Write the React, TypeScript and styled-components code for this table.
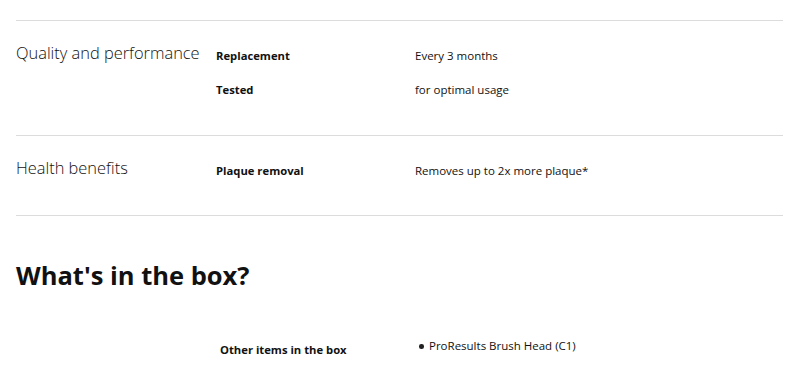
import React from "react";
import styled, { createGlobalStyle } from "styled-components";

const Global = createGlobalStyle`
  html, body { margin: 0; padding: 0; background: #fff; }
  body { font-family: "Open Sans", "Noto Sans", Arial, sans-serif; color: #111; }
`;

const Page = styled.div`
  padding: 20px 4px 0 16px;
`;

const Group = styled.section<{ $last?: boolean }>`
  display: grid;
  grid-template-columns: 200px 199px 1fr;
  border-top: 1px solid #dcdcdc;
  ${(p) => (p.$last ? "border-bottom: 1px solid #dcdcdc; padding-bottom: 28px;" : "padding-bottom: 29px;")}
  padding-top: 17px;
`;

const GroupTitle = styled.h3`
  grid-column: 1;
  margin: 0;
  font-size: 16.4px;
  font-weight: 300;
  line-height: 30px;
  color: #111;
`;

const Rows = styled.div`
  grid-column: 2 / span 2;
  display: flex;
  flex-direction: column;
`;

const Row = styled.div`
  display: grid;
  grid-template-columns: 199px 1fr;
  height: 34px;
  align-items: center;
`;

const Label = styled.span`
  font-size: 11.25px;
  font-weight: 700;
`;

const Value = styled.span`
  font-size: 11.5px;
  font-weight: 400;
`;

const Heading = styled.h2`
  margin: 42px 0 0;
  font-size: 25.5px;
  font-weight: 700;
  line-height: 34px;
`;

const BoxRow = styled.div`
  display: grid;
  grid-template-columns: 204px 195px 1fr;
  margin-top: 43px;
`;

const BoxLabel = styled.span`
  grid-column: 2;
  font-size: 11.25px;
  font-weight: 700;
  padding-top: 7px;
`;

const List = styled.ul`
  grid-column: 3;
  margin: 0;
  padding: 3px 0 0 4px;
  list-style: none;
`;

const Item = styled.li`
  position: relative;
  padding-left: 10px;
  font-size: 11.5px;
  line-height: 16px;
  &::before {
    content: "";
    position: absolute;
    left: 0;
    top: 6px;
    width: 4.5px;
    height: 4.5px;
    border-radius: 50%;
    background: #222;
  }
`;

const groups = [
  {
    title: "Quality and performance",
    rows: [
      ["Replacement", "Every 3 months"],
      ["Tested", "for optimal usage"],
    ],
  },
  {
    title: "Health benefits",
    rows: [["Plaque removal", "Removes up to 2x more plaque*"]],
  },
];

export default function App() {
  return (
    <>
      <Global />
      <Page>
        {groups.map((g, i) => (
          <Group key={g.title} $last={i === groups.length - 1}>
            <GroupTitle>{g.title}</GroupTitle>
            <Rows>
              {g.rows.map(([l, v]) => (
                <Row key={l}>
                  <Label>{l}</Label>
                  <Value>{v}</Value>
                </Row>
              ))}
            </Rows>
          </Group>
        ))}
        <Heading>What's in the box?</Heading>
        <BoxRow>
          <BoxLabel>Other items in the box</BoxLabel>
          <List>
            <Item>ProResults Brush Head (C1)</Item>
          </List>
        </BoxRow>
      </Page>
    </>
  );
}
